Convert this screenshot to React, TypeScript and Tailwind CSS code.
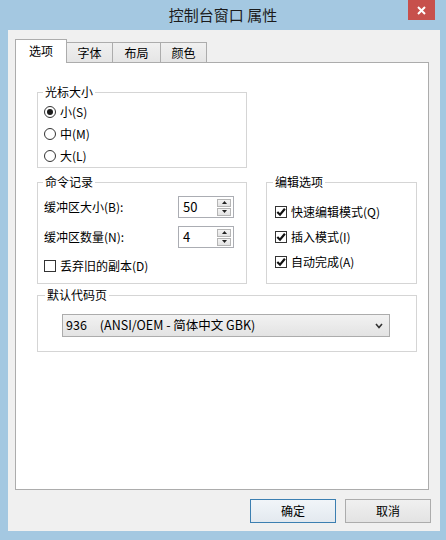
import React from "react";

function Radio({ checked, label }: { checked?: boolean; label: string }) {
  return (
    <div className="flex items-center h-[22px] gap-[4px]">
      <span className="w-[12px] h-[12px] rounded-full border border-[#333333] bg-white flex items-center justify-center">
        {checked && <span className="w-[6px] h-[6px] rounded-full bg-[#1a1a1a]" />}
      </span>
      <span>{label}</span>
    </div>
  );
}

function Check({ checked, label, h = "h-[22px]" }: { checked?: boolean; label: string; h?: string }) {
  return (
    <div className={`flex items-center ${h} gap-[4px]`}>
      <span className="w-[12px] h-[12px] border border-[#333333] bg-white flex items-center justify-center">
        {checked && (
          <svg width="10" height="10" viewBox="0 0 10 10">
            <path d="M1.3 5 L4 7.7 L8.9 1.8" fill="none" stroke="#111" strokeWidth="2.2" />
          </svg>
        )}
      </span>
      <span>{label}</span>
    </div>
  );
}

function SpinBtn({ up }: { up?: boolean }) {
  return (
    <div className="w-[14px] h-[8px] border border-[#b5b5b5] bg-gradient-to-b from-[#f4f4f4] to-[#e3e3e3] flex items-center justify-center">
      <svg width="5" height="3" viewBox="0 0 5 3">
        {up ? <path d="M0 3 L2.5 0 L5 3 Z" fill="#222" /> : <path d="M0 0 L2.5 3 L5 0 Z" fill="#222" />}
      </svg>
    </div>
  );
}

function Spin({ value }: { value: string }) {
  return (
    <div className="w-[56px] h-[22px] border border-[#abadb3] bg-white flex items-center pl-[4px] pr-[2px]">
      <span className="flex-1 text-[13px]">{value}</span>
      <div className="flex flex-col gap-[1px]">
        <SpinBtn up />
        <SpinBtn />
      </div>
    </div>
  );
}

export default function App() {
  return (
    <div className="w-[446px] h-[540px] bg-[#a4c8e1] flex flex-col font-['Noto_Sans_CJK_SC',sans-serif] text-[12px] text-black">
      {/* title bar */}
      <div className="relative h-[30px] flex items-center justify-center">
        <span className="text-[15px] text-[#1b1b1b] leading-none pb-[2px]">控制台窗口 属性</span>
        <div className="absolute top-0 right-[11px] w-[27px] h-[20px] bg-[#c7504c] flex items-center justify-center">
          <svg width="9" height="9" viewBox="0 0 9 9">
            <path d="M1 1 L8 8 M8 1 L1 8" stroke="#fff" strokeWidth="2" />
          </svg>
        </div>
      </div>

      {/* client */}
      <div className="ml-[8px] w-[432px] h-[501px] bg-[#f0f0f0] flex flex-col pl-[7px] pt-[9px]">
        {/* tabs */}
        <div className="flex items-end h-[23px] w-[414px]">
          <div className="relative z-10 -mb-px w-[52px] h-[24px] bg-white border-l border-t border-r border-[#acacac] flex items-center justify-center pb-[2px]">
            选项
          </div>
          <div className="w-[46px] h-[20px] border-t border-r border-[#acacac] bg-gradient-to-b from-[#f0f0f0] to-[#e5e5e5] flex items-center justify-center">
            字体
          </div>
          <div className="w-[48px] h-[20px] border-t border-r border-[#acacac] bg-gradient-to-b from-[#f0f0f0] to-[#e5e5e5] flex items-center justify-center">
            布局
          </div>
          <div className="w-[46px] h-[20px] border-t border-r border-[#acacac] bg-gradient-to-b from-[#f0f0f0] to-[#e5e5e5] flex items-center justify-center">
            颜色
          </div>
        </div>

        {/* panel */}
        <div className="w-[414px] h-[428px] bg-white border border-[#acacac] pt-[21px] pl-[21px] flex flex-col">
          {/* cursor size */}
          <fieldset className="w-[210px] border border-[#d5d5d5] pl-[6px] pt-[1px] pb-0">
            <legend className="ml-[-1px] px-[2px] leading-[16px]">光标大小</legend>
            <Radio checked label="小(S)" />
            <Radio label="中(M)" />
            <Radio label="大(L)" />
          </fieldset>

          <div className="flex items-stretch gap-[19px] mt-[6px]">
            {/* history */}
            <fieldset className="w-[210px] border border-[#d5d5d5] pl-[6px] pt-[6px] pb-[7px]">
              <legend className="ml-[-1px] px-[2px] leading-[16px]">命令记录</legend>
              <div className="flex items-center h-[22px]">
                <span className="w-[134px]">缓冲区大小(B):</span>
                <Spin value="50" />
              </div>
              <div className="flex items-center h-[22px] mt-[8px]">
                <span className="w-[134px]">缓冲区数量(N):</span>
                <Spin value="4" />
              </div>
              <Check label="丢弃旧的副本(D)" h="h-[20px] mt-[8px]" />
            </fieldset>

            {/* edit options */}
            <fieldset className="w-[151px] border border-[#d5d5d5] pl-[8px] pt-[11px] pb-[7px]">
              <legend className="ml-[-2px] px-[2px] leading-[16px]">编辑选项</legend>
              <div className="flex flex-col gap-[3px]">
                <Check checked label="快速编辑模式(Q)" />
                <Check checked label="插入模式(I)" />
                <Check checked label="自动完成(A)" />
              </div>
            </fieldset>
          </div>

          {/* code page */}
          <fieldset className="w-[380px] mt-[3px] border border-[#d5d5d5] pl-[24px] pt-[11px] pb-[14px]">
            <legend className="ml-[-17px] px-[2px] leading-[16px]">默认代码页</legend>
            <div className="w-[328px] h-[23px] border border-[#acacac] bg-gradient-to-b from-[#f2f2f2] to-[#e3e3e3] flex items-center pl-[3px] pr-[6px] text-[12.5px]">
              <span>936</span>
              <span className="flex-1 ml-[13px]">(ANSI/OEM - 简体中文 GBK)</span>
              <svg width="8" height="6" viewBox="0 0 8 6">
                <path d="M1 1 L4 4.5 L7 1" fill="none" stroke="#333" strokeWidth="1.6" />
              </svg>
            </div>
          </fieldset>
        </div>

        {/* buttons */}
        <div className="flex justify-end gap-[9px] pr-[9px] mt-[9px]">
          <div className="w-[86px] h-[24px] border border-[#3c7fb1] bg-gradient-to-b from-[#f1f5f9] to-[#e3e9ef] flex items-center justify-center">
            确定
          </div>
          <div className="w-[86px] h-[24px] border border-[#acacac] bg-gradient-to-b from-[#f0f0f0] to-[#e3e3e3] flex items-center justify-center">
            取消
          </div>
        </div>
      </div>
    </div>
  );
}
